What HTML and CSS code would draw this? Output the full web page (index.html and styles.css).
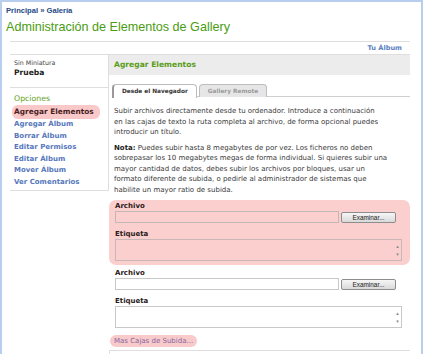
FILE: index.html
```html
<!DOCTYPE html>
<html lang="es">

<head>
  <meta charset="utf-8">
  <title>Administración de Elementos de Gallery</title>
  <link rel="stylesheet" href="styles.css">
</head>

<body>
  <div class="frame">
    <div class="crumbs"><a href="#">Principal</a> » <a href="#">Galería</a></div>
    <h1>Administración de Elementos de Gallery</h1>

    <div class="wrap">
      <div class="topbar"><a href="#">Tu Álbum</a></div>

      <div class="cols">
        <div class="sidebar">
          <div class="thumb">
            <div class="nothumb">Sin Miniatura</div>
            <div class="albumName">Prueba</div>
          </div>
          <div class="options">
            <h3>Opciones</h3>
            <ul>
              <li class="active">Agregar Elementos</li>
              <li><a href="#">Agregar Álbum</a></li>
              <li><a href="#">Borrar Álbum</a></li>
              <li><a href="#">Editar Permisos</a></li>
              <li><a href="#">Editar Álbum</a></li>
              <li><a href="#">Mover Álbum</a></li>
              <li><a href="#">Ver Comentarios</a></li>
            </ul>
          </div>
        </div>

        <div class="main">
          <h2>Agregar Elementos</h2>
          <div class="tabs">
            <span class="tab current">Desde el Navegador</span>
            <span class="tab">Gallery Remote</span>
          </div>

          <p class="intro lead">Subir archivos directamente desde tu ordenador. Introduce a continuación en las cajas de texto la ruta completa al archivo, de forma opcional puedes introducir un título.</p>
          <p class="intro"><b>Nota:</b> Puedes subir hasta 8 megabytes de por vez. Los ficheros no deben sobrepasar los 10 megabytes megas de forma individual. Si quieres subir una mayor cantidad de datos, debes subir los archivos por bloques, usar un formato diferente de subida, o pedirle al administrador de sistemas que habilite un mayor ratio de subida.</p>

          <div class="upload hl">
            <label>Archivo</label>
            <div class="fileRow">
              <input type="text" class="fileField">
              <button class="browse">Examinar...</button>
            </div>
            <label>Etiqueta</label>
            <div class="area"><span class="scroll">▴<br>▾</span></div>
          </div>

          <div class="upload">
            <label>Archivo</label>
            <div class="fileRow">
              <input type="text" class="fileField">
              <button class="browse">Examinar...</button>
            </div>
            <label>Etiqueta</label>
            <div class="area"><span class="scroll">▴<br>▾</span></div>
          </div>

          <a href="#" class="more">Mas Cajas de Subida...</a>
          <div class="foot"></div>
        </div>
      </div>
    </div>
  </div>
</body>

</html>
```

FILE: styles.css
```css
body {
  margin: 0;
  background-color: #fff;
  font-family: "DejaVu Sans", Verdana, sans-serif;
  color: #333;
}

a {
  text-decoration: none;
}

.frame {
  box-sizing: border-box;
  min-height: 100vh;
  border: 2px solid #b9cdee;
  border-bottom: none;
  overflow: hidden;
}

.crumbs {
  padding: 4px 0 0 4px;
  font-family: "Liberation Sans", Arial, sans-serif;
  font-size: 7.6px;
  line-height: 9px;
  font-weight: bold;
  color: #254a86;
}

.crumbs a {
  color: #254a86;
}

h1 {
  margin: 5px 0 0 4px;
  font-family: "Liberation Sans", Arial, sans-serif;
  font-size: 12.6px;
  line-height: 15px;
  font-weight: normal;
  color: #4a9c12;
}

.wrap {
  margin: 6px 11px 0 8px;
}

.topbar {
  border-top: 1px solid #dedede;
  height: 12px;
  line-height: 12px;
  text-align: right;
  padding-right: 8px;
  font-size: 6.6px;
  font-weight: bold;
}

.topbar a {
  color: #5b80c2;
}

.cols {
  display: flex;
  border-top: 1px solid #dedede;
}

.sidebar {
  width: 99px;
  border-right: 1px solid #dedede;
  border-bottom: 1px solid #dedede;
  align-self: flex-start;
}

.thumb {
  height: 33px;
  padding: 3px 0 0 4px;
  box-sizing: border-box;
  border-bottom: 1px solid #dedede;
}

.nothumb {
  font-size: 6.3px;
  line-height: 9px;
  color: #444;
}

.albumName {
  font-size: 7.6px;
  line-height: 11px;
  font-weight: bold;
  color: #222;
}

.options {
  padding: 5px 0 2px 2px;
}

.options h3 {
  margin: 0 0 0 2px;
  font-size: 7.8px;
  line-height: 11px;
  font-weight: normal;
  color: #66a31c;
}

.options ul {
  list-style: none;
  margin: 0;
  padding: 0;
}

.options li {
  font-size: 7px;
  line-height: 11.5px;
  font-weight: bold;
  padding-left: 2px;
}

.options li a {
  color: #5677bb;
}

.options li.active {
  width: fit-content;
  padding: 1px 6px 1px 2px;
  margin-top: 1px;
  line-height: 12px;
  font-size: 7.4px;
  background-color: #f9c9c9;
  border-radius: 6px;
  color: #4a1d1d;
}

.main {
  flex: 1;
}

h2 {
  margin: 0;
  height: 20px;
  line-height: 20px;
  padding-left: 5px;
  background-color: #ececec;
  font-size: 7.6px;
  font-weight: bold;
  color: #5a9c1a;
}

.tabs {
  display: flex;
  gap: 2px;
  margin: 9px 0 0 3px;
  border-bottom: 1px solid #cfcfcf;
  height: 12px;
}

.tab {
  height: 12px;
  line-height: 13px;
  padding: 0 8px;
  border: 1px solid #bdbdbd;
  border-bottom: none;
  border-radius: 4px 4px 0 0;
  background-color: #e6e6e6;
  font-size: 5.8px;
  font-weight: bold;
  color: #9a9a9a;
}

.tab.current {
  background-color: #fff;
  color: #333;
  height: 13px;
  border-left: 2px solid #999;
}

.intro {
  margin: 5px 18px 0 5px;
  font-size: 7px;
  line-height: 10.5px;
  color: #3a3a3a;
}

.intro.lead {
  margin-top: 9px;
  margin-right: 27px;
}

.intro b {
  color: #222;
}

.upload {
  margin-top: 2px;
  padding: 1px 8px 4px 6px;
  border-radius: 7px;
}

.upload.hl {
  margin-top: 5px;
  background-color: #fccfcf;
}

.upload label {
  display: block;
  font-size: 7px;
  line-height: 10px;
  font-weight: bold;
  color: #2a1a1a;
}

.fileRow {
  display: flex;
  align-items: center;
  gap: 2px;
  margin-bottom: 6px;
}

.fileField {
  box-sizing: border-box;
  width: 224px;
  height: 12px;
  margin: 0;
  padding: 0;
  border: 1px solid #c4b7b7;
  background-color: transparent;
}

.upload:not(.hl) .fileField {
  background-color: #fff;
  border-color: #c8c8c8;
}

.browse {
  box-sizing: border-box;
  width: 55px;
  height: 11px;
  margin: 0;
  padding: 0;
  border: 1px solid #8d8d8d;
  border-radius: 2px;
  background: linear-gradient(#f6f6f6, #d9d9d9);
  font-family: "Liberation Sans", Arial, sans-serif;
  font-size: 6.4px;
  line-height: 9px;
  color: #222;
}

.area {
  box-sizing: border-box;
  display: flex;
  justify-content: flex-end;
  width: 287px;
  height: 22px;
  border: 1px solid #c8c8c8;
  background-color: #fff;
}

.upload.hl .area {
  background-color: transparent;
  border-color: #c9b6b6;
}

.scroll {
  width: 7px;
  padding-top: 2px;
  font-size: 5px;
  line-height: 8px;
  color: #888;
  text-align: center;
}

.more {
  display: block;
  width: fit-content;
  margin: 3px 0 0 1px;
  padding: 0 4px;
  height: 12px;
  line-height: 12px;
  border-radius: 6px;
  background-color: #f8caca;
  font-size: 7px;
  color: #8766a0;
}

.foot {
  margin-top: 3px;
  border-top: 1px solid #dedede;
  border-left: 1px solid #dedede;
  height: 10px;
}
```
